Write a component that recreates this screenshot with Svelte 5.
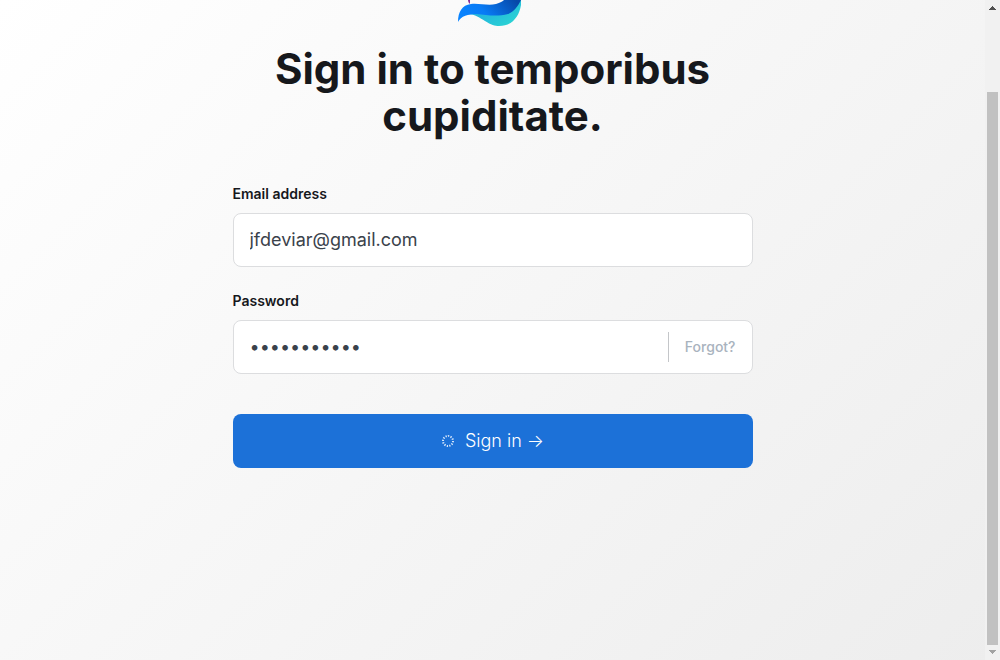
<script>
  let email = $state('jfdeviar@gmail.com');
  let password = $state('password123');
</script>

<div class="window">
  <main>
    <svg class="logo" viewBox="0 0 66 28" aria-hidden="true">
      <defs>
        <linearGradient id="wave" x1="0" y1="0.6" x2="1" y2="0.3">
          <stop offset="0" stop-color="#0a84ff" />
          <stop offset="0.4" stop-color="#087bf5" />
          <stop offset="1" stop-color="#0648a8" />
        </linearGradient>
        <linearGradient id="foam" x1="0" y1="0" x2="1" y2="0.8">
          <stop offset="0" stop-color="#1ea0e4" />
          <stop offset="1" stop-color="#2bd5d3" />
        </linearGradient>
      </defs>
      <path d="M11 0h2v4c-1-1-2-2-2-4z" fill="#8a2f9c" />
      <path d="M11 14C18 14 23 18 28 21C34 25 38 26 42 26C55 26 62 17 64 5V0H56L20 10Z" fill="url(#foam)" />
      <path d="M1 22C1 12 5 5 14 4C22 3 31 6 39 4C43 3 46 1 47 0H64C61 6 57 12 51 14C40 17 29 15 20 14C11 14 4 16 1 22Z" fill="url(#wave)" />
    </svg>

    <h1>Sign in to temporibus cupiditate.</h1>

    <form onsubmit={(event) => event.preventDefault()}>
      <label for="email">Email address</label>
      <div class="field">
        <input id="email" type="email" bind:value={email} />
      </div>

      <label for="password">Password</label>
      <div class="field">
        <input id="password" type="password" bind:value={password} />
        <a href="#forgot">Forgot?</a>
      </div>

      <button type="submit">
        <svg class="spinner" viewBox="0 0 14 14" aria-hidden="true">
          <circle cx="7" cy="8" r="5" pathLength="36" />
        </svg>
        <span>Sign in →</span>
      </button>
    </form>
  </main>

  <div class="scrollbar" aria-hidden="true">
    <svg viewBox="0 0 15 15"><path d="M4 10h7V9h-1V8H9V7H8V6H7v1H6v1H5v1H4z" fill="#505050" /></svg>
    <div class="track"></div>
    <div class="thumb"></div>
    <svg viewBox="0 0 15 15"><path d="M4 5h7v1h-1v1H9v1H8v1H7V8H6V7H5V6H4z" fill="#a3a3a3" /></svg>
  </div>
</div>

<style>
  :global(body) {
    margin: 0;
  }

  .window {
    display: flex;
    min-height: 100vh;
    font-family: Inter, "Liberation Sans", sans-serif;
    color: #16181c;
    background: linear-gradient(135deg, #ffffff, #ededed);
  }

  main {
    flex: 1;
    display: flex;
    flex-direction: column;
    align-items: center;
    padding: 0 16px;
  }

  .logo {
    width: 66px;
    height: 28px;
    margin-right: 5px;
  }

  h1 {
    max-width: 520px;
    margin: 17px 0 44px;
    font-size: 42px;
    line-height: 47px;
    font-weight: 700;
    text-align: center;
  }

  form {
    width: 100%;
    max-width: 520px;
  }

  label {
    display: block;
    margin-bottom: 9px;
    font-size: 14px;
    line-height: 21px;
    font-weight: 600;
  }

  .field {
    box-sizing: border-box;
    display: flex;
    align-items: center;
    height: 54px;
    margin-bottom: 23px;
    background: #fff;
    border: 1px solid #dcdddf;
    border-radius: 8px;
  }

  input {
    flex: 1;
    min-width: 0;
    padding: 0 16px 2px;
    border: 0;
    outline: 0;
    background: none;
    font: inherit;
    font-size: 18px;
    color: #3a424b;
  }

  a {
    padding: 0 16px;
    border-left: 1px solid #c4c6c9;
    font-size: 14px;
    line-height: 30px;
    font-weight: 500;
    color: #a9b3be;
    text-decoration: none;
  }

  button {
    display: flex;
    align-items: center;
    justify-content: center;
    gap: 10px;
    width: 100%;
    height: 54px;
    margin-top: 40px;
    padding: 0 0 2px;
    border: 0;
    border-radius: 8px;
    background: #1c71d8;
    color: #fff;
    font: inherit;
    font-size: 18px;
    font-weight: 300;
  }

  .spinner {
    width: 14px;
    height: 14px;
    fill: none;
    stroke: #d6e6fa;
    stroke-width: 2;
    stroke-dasharray: 1.5 1.5;
  }

  .scrollbar {
    display: flex;
    flex-direction: column;
    width: 15px;
    background: #f1f1f1;
  }

  .scrollbar svg {
    width: 15px;
    height: 15px;
  }

  .track {
    flex: 77;
  }

  .thumb {
    flex: 553;
    margin: 0 2px;
    background: #c1c1c1;
  }
</style>
